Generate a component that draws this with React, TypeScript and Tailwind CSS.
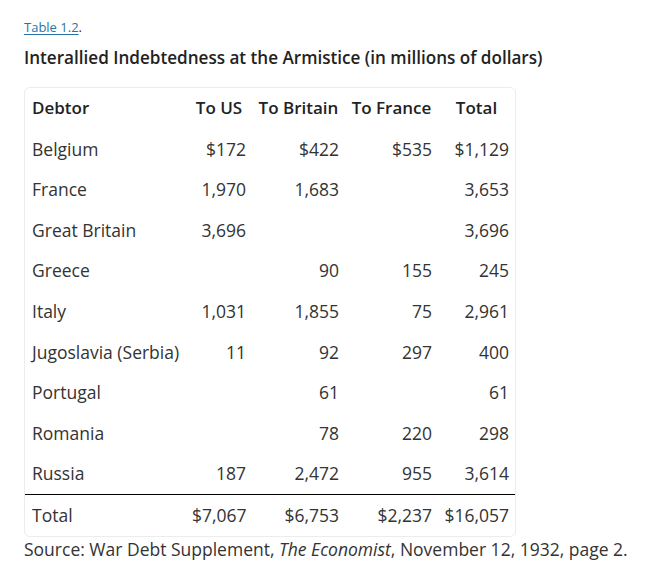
const rows: [string, string, string, string, string][] = [
  ["Belgium", "$172", "$422", "$535", "$1,129"],
  ["France", "1,970", "1,683", "", "3,653"],
  ["Great Britain", "3,696", "", "", "3,696"],
  ["Greece", "", "90", "155", "245"],
  ["Italy", "1,031", "1,855", "75", "2,961"],
  ["Jugoslavia (Serbia)", "11", "92", "297", "400"],
  ["Portugal", "", "61", "", "61"],
  ["Romania", "", "78", "220", "298"],
  ["Russia", "187", "2,472", "955", "3,614"],
];

const total = ["Total", "$7,067", "$6,753", "$2,237", "$16,057"];

const font = { fontFamily: '"Open Sans", "Noto Sans", sans-serif' };

export default function App() {
  return (
    <div
      className="min-h-[585px] bg-white pl-6 pt-[18px] text-[#333]"
      style={font}
    >
      <p className="text-[13px] leading-[18px]">
        <a href="#" className="text-[#2874a6] underline underline-offset-2">
          Table 1.2
        </a>
        .
      </p>
      <h3 className="mt-[10px] text-[17.1px] font-semibold leading-6 text-[#222]">
        Interallied Indebtedness at the Armistice (in millions of dollars)
      </h3>
      <div className="mt-[17px] w-[492px] rounded-md border border-[#ececec]">
        <table className="w-full table-fixed border-collapse text-[17.5px] leading-[24.6px]">
          <colgroup>
            <col className="w-[161px]" />
            <col className="w-[66px]" />
            <col className="w-[93px]" />
            <col className="w-[93px]" />
            <col className="w-[77px]" />
          </colgroup>
          <thead>
            <tr className="text-[17px] text-[#222]">
              <th className="py-2 pl-[7px] text-left font-semibold">Debtor</th>
              <th className="px-1.5 py-2 text-center font-semibold">To US</th>
              <th className="px-1 py-2 text-center font-semibold whitespace-nowrap">
                To Britain
              </th>
              <th className="px-1 py-2 text-center font-semibold whitespace-nowrap">
                To France
              </th>
              <th className="px-1.5 py-2 text-center font-semibold">Total</th>
            </tr>
          </thead>
          <tbody>
            {rows.map((r, i) => (
              <tr
                key={r[0]}
                className={i === rows.length - 1 ? "border-b border-black" : ""}
              >
                <td className="py-2 pl-[7px] text-left whitespace-nowrap">{r[0]}</td>
                {r.slice(1).map((v, j) => (
                  <td key={j} className="px-1.5 py-2 text-right">
                    {v}
                  </td>
                ))}
              </tr>
            ))}
            <tr>
              <td className="py-2 pl-[7px] text-left">{total[0]}</td>
              {total.slice(1).map((v, j) => (
                <td key={j} className="px-1.5 py-2 text-right">
                  {v}
                </td>
              ))}
            </tr>
          </tbody>
        </table>
      </div>
      <p className="text-[17.5px] leading-6">
        Source: War Debt Supplement, <i>The Economist</i>, November 12, 1932,
        page 2.
      </p>
    </div>
  );
}
